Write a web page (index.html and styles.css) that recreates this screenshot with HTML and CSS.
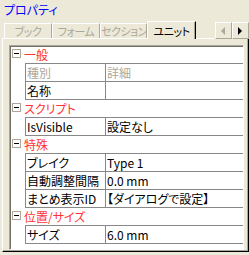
FILE: index.html
```html
<!DOCTYPE html>
<html lang="ja">
<head>
    <meta charset="UTF-8">
    <meta name="viewport" content="width=device-width, initial-scale=1.0">
    <title>プロパティ</title>
    <link rel="stylesheet" href="styles.css">
</head>
<body>
    <div class="title">プロパティ</div>

    <div class="tabctl">
        <div class="tab-row">
            <div class="tab w48">ブック</div>
            <div class="tab w48">フォーム</div>
            <div class="tab w47">セクション</div>
            <div class="tab active">ユニット</div>
            <div class="scroll-btns">
                <div class="sbtn">
                    <svg width="5" height="8" viewBox="0 0 5 8"><path d="M4 0 L0 4 L4 8 Z" fill="#aca899"/></svg>
                </div>
                <div class="sbtn">
                    <svg width="5" height="8" viewBox="0 0 5 8"><path d="M0 0 L4 4 L0 8 Z" fill="#000"/></svg>
                </div>
            </div>
        </div>

        <div class="panel">
            <div class="grid">
                <div class="cat"><span class="toggle"></span>一般</div>
                <div class="props">
                    <div class="row"><div class="name dim">種別</div><div class="val dim">詳細</div></div>
                    <div class="row"><div class="name">名称</div><div class="val"></div></div>
                </div>

                <div class="cat"><span class="toggle"></span>スクリプト</div>
                <div class="props">
                    <div class="row"><div class="name">IsVisible</div><div class="val">設定なし</div></div>
                </div>

                <div class="cat"><span class="toggle"></span>特殊</div>
                <div class="props">
                    <div class="row"><div class="name">ブレイク</div><div class="val">Type 1</div></div>
                    <div class="row"><div class="name">自動調整間隔</div><div class="val">0.0 mm</div></div>
                    <div class="row"><div class="name">まとめ表示ID</div><div class="val">【ダイアログで設定】</div></div>
                </div>

                <div class="cat"><span class="toggle"></span>位置/サイズ</div>
                <div class="props">
                    <div class="row"><div class="name">サイズ</div><div class="val">6.0 mm</div></div>
                </div>
            </div>
        </div>
    </div>
</body>
</html>
```

FILE: styles.css
```css
* { box-sizing: border-box; }

body {
    margin: 0;
    height: 255px;
    background-color: #ece9d8;
    font-family: "Noto Sans CJK JP", sans-serif;
    font-size: 12px;
    font-feature-settings: "palt";
    color: #000;
}

.title {
    color: #0000ff;
    line-height: 16px;
    padding: 2px 4px 3px;
}

.tabctl {
    margin-left: 2px;
    width: 247px;
}

/* tab strip */
.tab-row {
    display: flex;
    align-items: flex-start;
    height: 17px;
    padding-left: 2px;
}
.tab {
    margin-top: 2px;
    height: 15px;
    line-height: 14px;
    font-size: 11px;
    letter-spacing: -0.5px;
    text-align: center;
    color: #aca899;
    border-top: 1px solid #fff;
    border-left: 1px solid #fff;
    border-right: 1px solid #aca899;
    white-space: nowrap;
    overflow: hidden;
}
.w48 { width: 48px; }
.w47 { width: 47px; }
.tab.active {
    position: relative;
    z-index: 1;
    width: 49px;
    margin-top: 0;
    height: 18px;
    padding-top: 2px;
    color: #000;
    background: #ece9d8;
    border-right: 1px solid #000;
    box-shadow: inset -1px 0 0 #aca899;
}

.scroll-btns {
    display: flex;
    margin-left: auto;
    margin-top: 1px;
    position: relative;
    z-index: 1;
}
.sbtn {
    width: 17px;
    height: 17px;
    display: flex;
    align-items: center;
    justify-content: center;
    background: #ece9d8;
    border-top: 1px solid #fff;
    border-left: 1px solid #fff;
    border-right: 1px solid #aca899;
    border-bottom: 1px solid #aca899;
}

/* tab page */
.panel {
    height: 214px;
    padding: 6px 0 0 6px;
    border-top: 1px solid #fff;
    border-left: 1px solid #fff;
    border-right: 1px solid #000;
    border-bottom: 1px solid #000;
    box-shadow: inset -1px -1px 0 #aca899;
}

/* property grid */
.grid {
    width: 235px;
    height: 205px;
    background: #fff;
    border-top: 1px solid #aca899;
    border-left: 1px solid #aca899;
    border-right: 1px solid #fff;
    border-bottom: 1px solid #fff;
    box-shadow: inset 1px 1px 0 #716f64;
}

.cat {
    display: flex;
    height: 17px;
    line-height: 17px;
    color: #ff3333;
    padding-left: 2px;
}
.toggle {
    width: 9px;
    height: 9px;
    margin-top: 3px;
    margin-right: 3px;
    border: 1px solid #aca899;
    display: flex;
    align-items: center;
    justify-content: center;
}
.toggle::after {
    content: "";
    width: 5px;
    height: 1px;
    background: #000;
}

.props {
    margin-left: 15px;
    border-top: 1px solid #888;
    border-left: 1px solid #888;
}
.row {
    display: flex;
    height: 18px;
    line-height: 17px;
    border-bottom: 1px solid #888;
    white-space: nowrap;
}
.name {
    width: 80px;
    padding-left: 1px;
    border-right: 1px solid #888;
}
.val {
    flex: 1;
    padding-left: 1px;
}
.dim { color: #aca899; }
```
